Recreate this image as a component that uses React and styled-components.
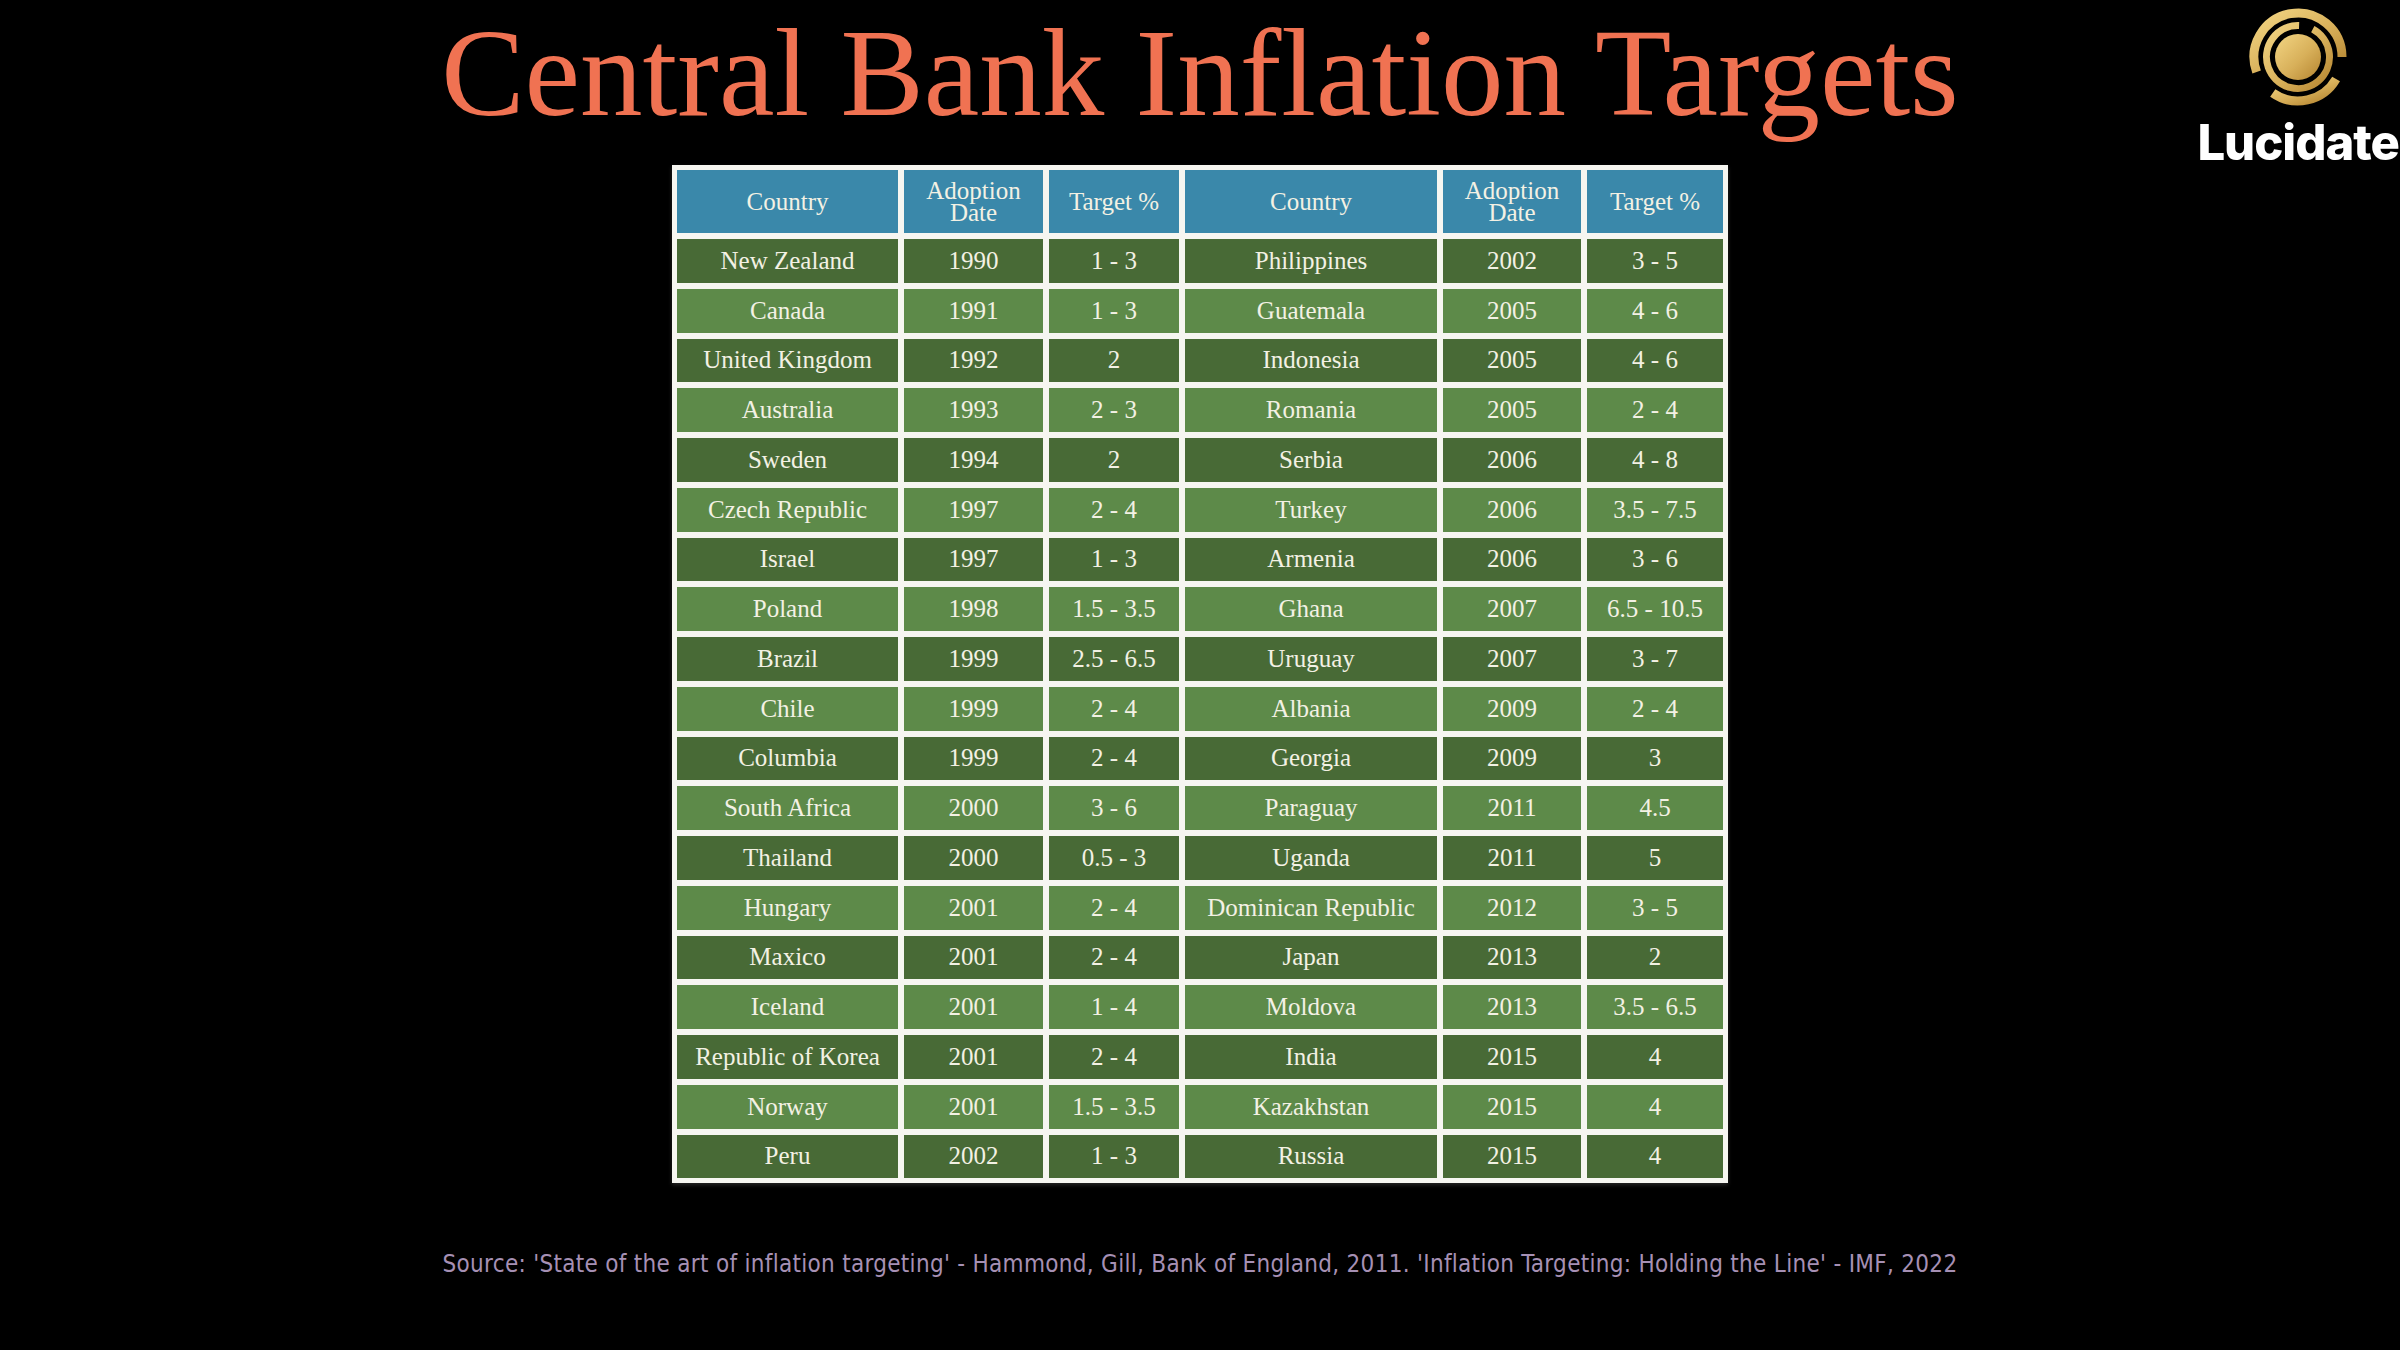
import React from 'react'
import styled, { createGlobalStyle } from 'styled-components'

const rows = [
  ['New Zealand', '1990', '1 - 3', 'Philippines', '2002', '3 - 5'],
  ['Canada', '1991', '1 - 3', 'Guatemala', '2005', '4 - 6'],
  ['United Kingdom', '1992', '2', 'Indonesia', '2005', '4 - 6'],
  ['Australia', '1993', '2 - 3', 'Romania', '2005', '2 - 4'],
  ['Sweden', '1994', '2', 'Serbia', '2006', '4 - 8'],
  ['Czech Republic', '1997', '2 - 4', 'Turkey', '2006', '3.5 - 7.5'],
  ['Israel', '1997', '1 - 3', 'Armenia', '2006', '3 - 6'],
  ['Poland', '1998', '1.5 - 3.5', 'Ghana', '2007', '6.5 - 10.5'],
  ['Brazil', '1999', '2.5 - 6.5', 'Uruguay', '2007', '3 - 7'],
  ['Chile', '1999', '2 - 4', 'Albania', '2009', '2 - 4'],
  ['Columbia', '1999', '2 - 4', 'Georgia', '2009', '3'],
  ['South Africa', '2000', '3 - 6', 'Paraguay', '2011', '4.5'],
  ['Thailand', '2000', '0.5 - 3', 'Uganda', '2011', '5'],
  ['Hungary', '2001', '2 - 4', 'Dominican Republic', '2012', '3 - 5'],
  ['Maxico', '2001', '2 - 4', 'Japan', '2013', '2'],
  ['Iceland', '2001', '1 - 4', 'Moldova', '2013', '3.5 - 6.5'],
  ['Republic of Korea', '2001', '2 - 4', 'India', '2015', '4'],
  ['Norway', '2001', '1.5 - 3.5', 'Kazakhstan', '2015', '4'],
  ['Peru', '2002', '1 - 3', 'Russia', '2015', '4'],
]

const headers = ['Country', 'Adoption Date', 'Target %', 'Country', 'Adoption Date', 'Target %']

// arc drawn counterclockwise (math angles, degrees) from a0 to a1
const arc = (r, a0, a1) => {
  const rad = d => (d * Math.PI) / 180
  const x0 = r * Math.cos(rad(a0))
  const y0 = -r * Math.sin(rad(a0))
  const x1 = r * Math.cos(rad(a1))
  const y1 = -r * Math.sin(rad(a1))
  const large = a1 - a0 > 180 ? 1 : 0
  return `M ${x0} ${y0} A ${r} ${r} 0 ${large} 0 ${x1} ${y1}`
}

const GlobalStyle = createGlobalStyle`
  html, body {
    margin: 0;
    padding: 0;
    background: #000;
  }
`

const Page = styled.div`
  width: 2400px;
  height: 1350px;
  background: #000;
  display: flex;
  flex-direction: column;
  align-items: center;
  overflow: hidden;
`

const Header = styled.header`
  width: 100%;
  height: 165px;
  display: grid;
  grid-template-columns: 1fr auto 1fr;
  align-items: start;
`

const Title = styled.h1`
  grid-column: 2;
  margin: 11px 0 0;
  font-family: 'Liberation Serif', 'DejaVu Serif', serif;
  font-weight: 400;
  font-size: 125px;
  line-height: 1;
  color: #f07252;
  white-space: nowrap;
`

const Logo = styled.div`
  grid-column: 3;
  justify-self: end;
  margin-right: 1px;
  padding-top: 7px;
  display: flex;
  flex-direction: column;
  align-items: center;
`

const LogoText = styled.div`
  margin-top: 11px;
  font-family: Inter, 'Open Sans', sans-serif;
  font-weight: 800;
  font-size: 49px;
  line-height: 1;
  color: #fff;
  letter-spacing: -1px;
`

const Table = styled.div`
  display: grid;
  grid-template-columns: 221px 139px 130px 252px 138px 136px;
  grid-template-rows: 63px;
  grid-auto-rows: 43.75px;
  gap: 6px;
  padding: 5px;
  background: #f6f6f1;
  box-shadow: 0 2px 4px rgba(255, 255, 255, 0.15);
`

const Cell = styled.div`
  display: flex;
  align-items: center;
  justify-content: center;
  text-align: center;
  background: ${p => (p.$light ? '#5d8a49' : '#486a36')};
  color: #f3f1e4;
  font-family: 'Liberation Serif', 'DejaVu Serif', serif;
  font-size: 25px;
  white-space: nowrap;
`

const HeadCell = styled(Cell)`
  background: #3a88aa;
  line-height: 0.88;
  padding: 0 14px;
  white-space: normal;
`

const Source = styled.p`
  margin: 66px 0 0;
  font-family: 'DejaVu Sans Condensed', 'Liberation Sans', sans-serif;
  font-stretch: condensed;
  font-size: 24px;
  line-height: 30px;
  color: #a690b4;
  letter-spacing: 0.3px;
  white-space: nowrap;
`

const LucidateMark = () => (
  <svg width="100" height="100" viewBox="-50 -50 100 100">
    <defs>
      <linearGradient id="gold" x1="0" y1="0" x2="1" y2="1">
        <stop offset="0" stopColor="#f3d684" />
        <stop offset="0.55" stopColor="#d8b05a" />
        <stop offset="1" stopColor="#b4842f" />
      </linearGradient>
    </defs>
    <g fill="none" stroke="url(#gold)">
      <path d={arc(44, 0, 200)} strokeWidth="9" />
      <path d={arc(44, 235, 330)} strokeWidth="9" />
      <path d={arc(31.5, 88, 422)} strokeWidth="7" />
    </g>
    <circle r="23" fill="url(#gold)" />
  </svg>
)

const App = () => {
  return (
    <Page>
      <GlobalStyle />
      <Header>
        <Title>Central Bank Inflation Targets</Title>
        <Logo>
          <LucidateMark />
          <LogoText>Lucidate</LogoText>
        </Logo>
      </Header>
      <Table>
        {headers.map((h, i) => (
          <HeadCell key={'h' + i}>{h}</HeadCell>
        ))}
        {rows.map((row, r) =>
          row.map((value, c) => (
            <Cell key={r + '-' + c} $light={r % 2 === 1}>
              {value}
            </Cell>
          ))
        )}
      </Table>
      <Source>
        Source: 'State of the art of inflation targeting' - Hammond, Gill, Bank of England, 2011. 'Inflation Targeting: Holding the Line' - IMF, 2022
      </Source>
    </Page>
  )
}

export default App
